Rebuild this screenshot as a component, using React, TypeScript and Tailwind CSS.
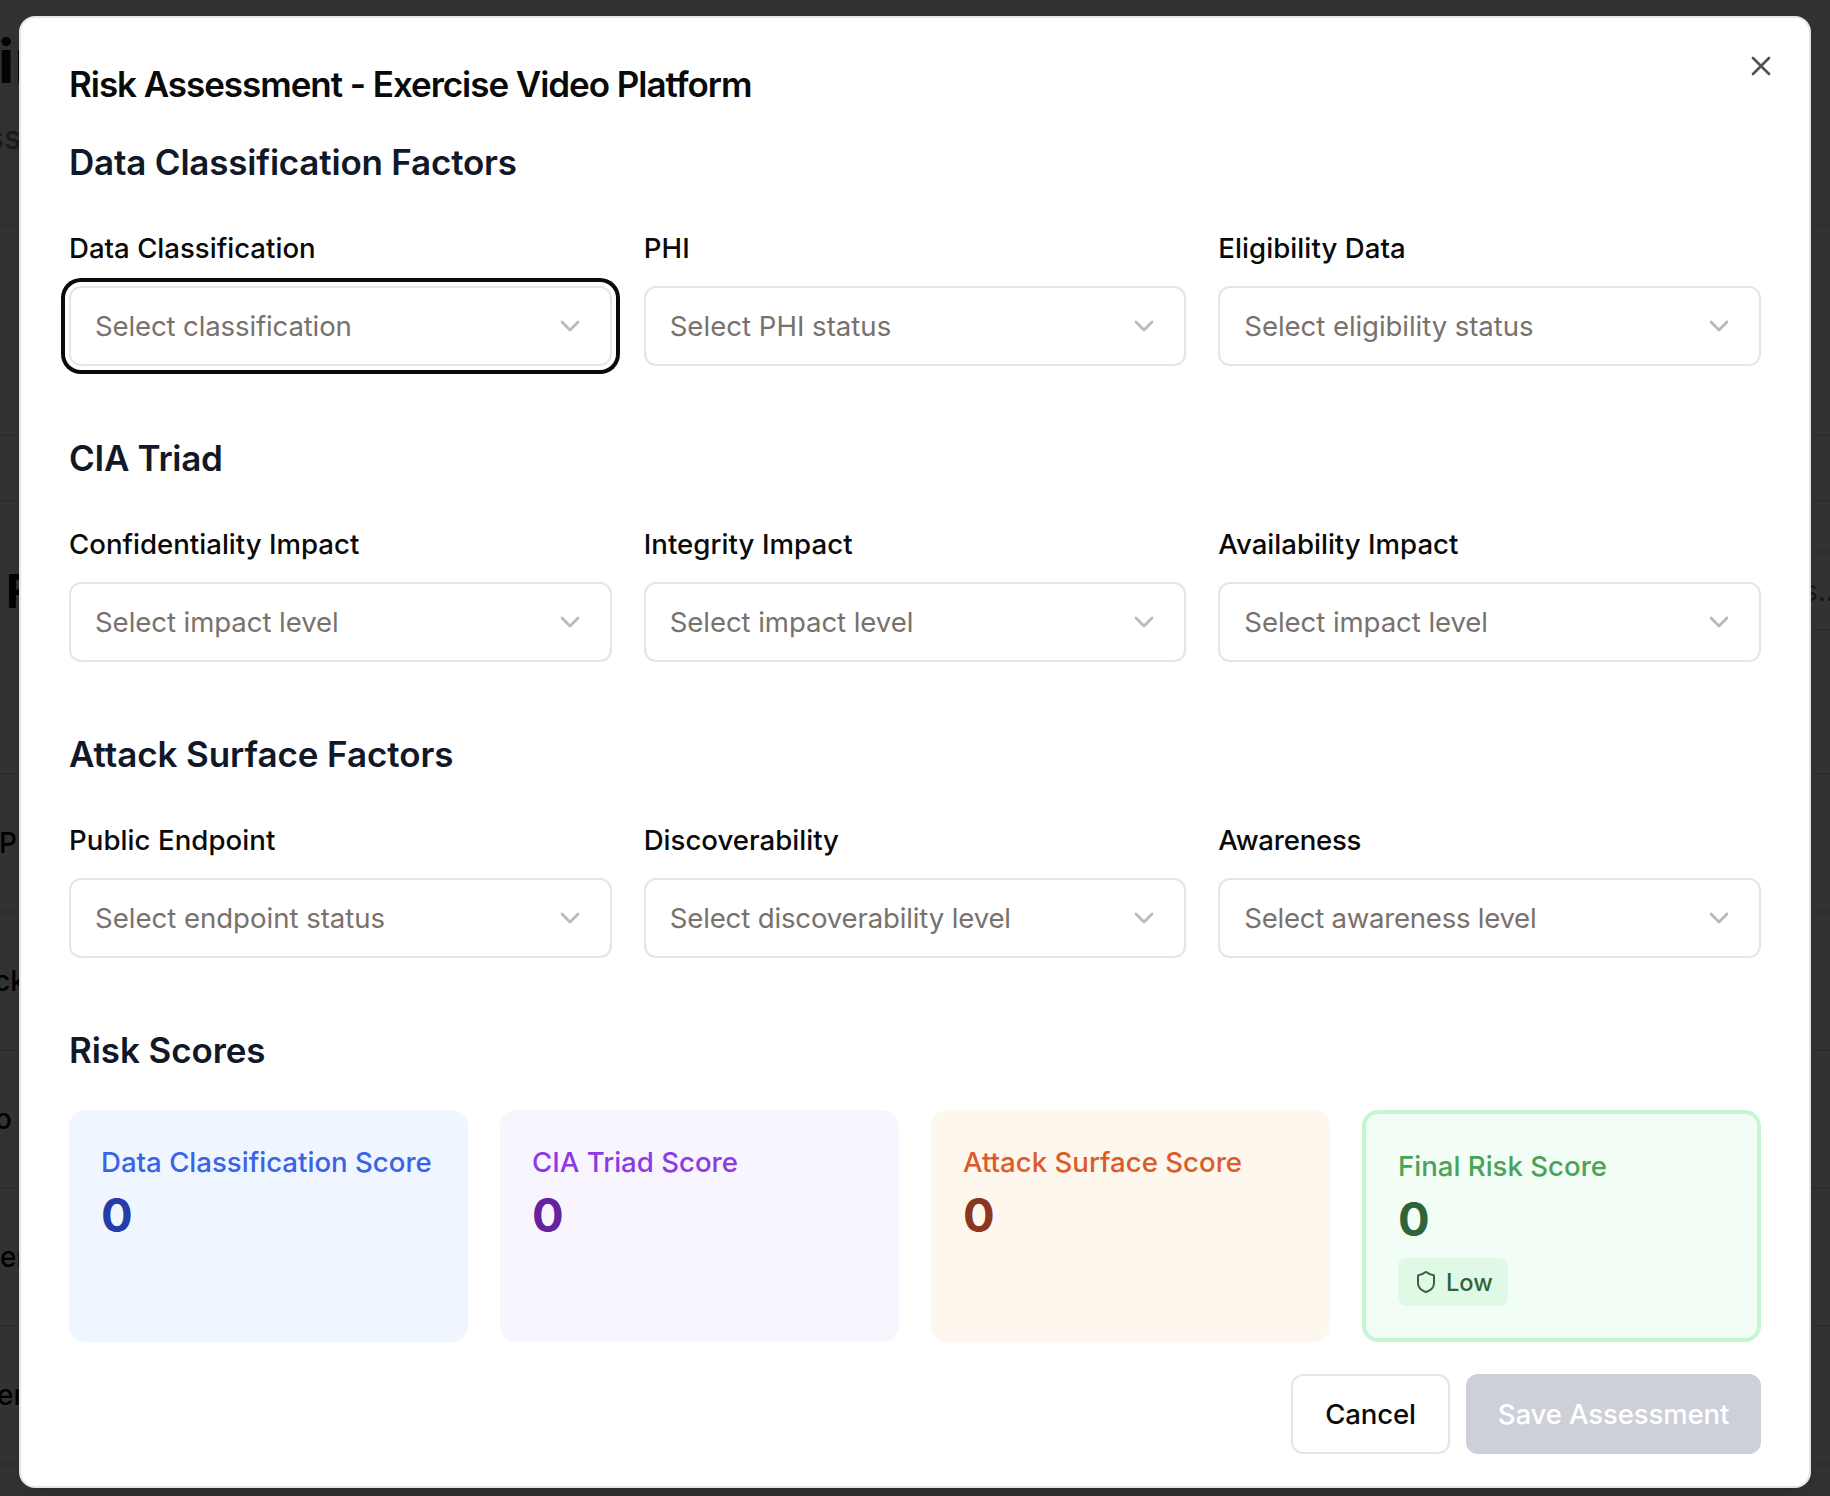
import { ChevronDown, Shield, X } from "lucide-react";

type Field = { label: string; placeholder: string; focused?: boolean; labelClass?: string; textClass?: string };

const sections: { title: string; spacing: string; fields: Field[] }[] = [
  {
    title: "Data Classification Factors",
    spacing: "tracking-[-0.2px]",
    fields: [
      { label: "Data Classification", placeholder: "Select classification", textClass: "tracking-[-0.15px]", focused: true },
      { label: "PHI", placeholder: "Select PHI status", labelClass: "tracking-[0.2px]", textClass: "tracking-normal" },
      { label: "Eligibility Data", placeholder: "Select eligibility status", labelClass: "tracking-[0.06px]" },
    ],
  },
  {
    title: "CIA Triad",
    spacing: "tracking-[-0.3px]",
    fields: [
      { label: "Confidentiality Impact", placeholder: "Select impact level" },
      { label: "Integrity Impact", placeholder: "Select impact level", labelClass: "tracking-[0.06px]" },
      { label: "Availability Impact", placeholder: "Select impact level" },
    ],
  },
  {
    title: "Attack Surface Factors",
    spacing: "tracking-[-0.08px]",
    fields: [
      { label: "Public Endpoint", placeholder: "Select endpoint status", labelClass: "tracking-[0.06px]", textClass: "tracking-[-0.03px]" },
      { label: "Discoverability", placeholder: "Select discoverability level", textClass: "tracking-[-0.16px]" },
      { label: "Awareness", placeholder: "Select awareness level", labelClass: "tracking-[-0.25px]", textClass: "tracking-[-0.27px]" },
    ],
  },
];

const scores = [
  { label: "Data Classification Score", box: "bg-[#eff6ff]", text: "text-[#3a63e8]", value: "text-[#263da8]" },
  { label: "CIA Triad Score", box: "bg-[#f8f5fe]", text: "text-[#8b3ae4]", value: "text-[#64249f]" },
  { label: "Attack Surface Score", box: "bg-[#fef7ed]", text: "text-[#dd5b2a]", value: "text-[#8b3720]" },
];

const rows = [
  { text: "P", offset: "-ml-px" },
  { text: "ck", offset: "-ml-[6px]" },
  { text: "o", offset: "-ml-[5px]" },
  { text: "er", offset: "ml-0" },
  { text: "er", offset: "-ml-[3px]" },
];

function Backdrop() {
  return (
    <div className="flex h-full w-full flex-col overflow-hidden bg-[#333333] whitespace-nowrap">
      <div className="h-[226px] shrink-0 border-b-2 border-[#303030] bg-[#323232]">
        <div className="-ml-[2px] pt-[31px] text-[60px] leading-[60px] font-bold text-[#030507]">in</div>
        <div className="-ml-[13px] pt-[25px] text-[32px] leading-[44px] text-[#17191c]">ss</div>
      </div>
      <div className="h-[210px] shrink-0 border-b-2 border-[#2e2e2e]" />
      <div className="h-[66px] shrink-0 border-b-2 border-[#2e2e2e]" />
      <div className="flex h-[273px] shrink-0 items-start justify-between border-b-2 border-[#2e2e2e]">
        <div className="ml-[6px] pt-[61px] text-[46px] leading-[56px] font-bold text-[#020202]">F</div>
        <div className="mt-[49px] flex h-[80px] w-[40px] items-center overflow-hidden border-y-2 border-[#2e2e2e] text-[28px] text-[#181716]">
          <span className="ml-[13px]">s...</span>
        </div>
      </div>
      {rows.map((r, i) => (
        <div key={i} className="flex h-[138px] shrink-0 items-center border-b-2 border-[#2e2e2e] text-[28px] font-medium text-[#020202]">
          <span className={r.offset}>{r.text}</span>
        </div>
      ))}
    </div>
  );
}

function SelectField({ label, placeholder, focused, labelClass = "", textClass = "tracking-[-0.08px]" }: Field) {
  return (
    <div className="flex min-w-0 flex-col gap-[18px]">
      <label className={"text-[27.6px] leading-[40px] font-medium text-[#0a0a0a] " + labelClass}>{label}</label>
      <button
        className={
          "flex h-20 items-center justify-between rounded-xl border-2 border-[#e5e5e5] bg-white px-6 text-[27.6px] text-[#78716c]" +
          (focused ? " ring-4 ring-[#0c0a09] ring-offset-4" : "")
        }
      >
        <span className={"pt-px " + textClass}>{placeholder}</span>
        <ChevronDown className="size-8 opacity-50" />
      </button>
    </div>
  );
}

export default function App() {
  return (
    <div className="relative h-[1496px] w-[1830px] overflow-hidden font-['Inter',sans-serif]">
      <Backdrop />
      <div className="absolute top-4 left-[19px] flex h-[1472px] w-[1792px] flex-col rounded-2xl border-2 border-[#e5e5e5] bg-white px-12 pt-12 shadow-[0_20px_30px_-6px_rgb(0_0_0/0.1),0_8px_12px_-8px_rgb(0_0_0/0.1)]">
        <h2 className="text-[35px] leading-9 font-semibold tracking-[-1.05px] text-[#0a0a0a]">
          Risk Assessment - Exercise Video Platform
        </h2>
        <div className="mt-8 flex flex-col gap-16">
          {sections.map((s) => (
            <section key={s.title}>
              <h3 className={"text-[35px] leading-[56px] font-semibold text-[#111827] " + s.spacing}>{s.title}</h3>
              <div className="mt-[38px] grid grid-cols-3 gap-8">
                {s.fields.map((f) => (
                  <SelectField key={f.label} {...f} />
                ))}
              </div>
            </section>
          ))}
          <section>
            <h3 className="text-[35px] leading-[56px] font-semibold tracking-[-0.1px] text-[#111827]">Risk Scores</h3>
            <div className="mt-8 grid h-[232px] grid-cols-4 gap-8">
              {scores.map((s) => (
                <div key={s.label} className={"rounded-2xl p-8 whitespace-nowrap " + s.box}>
                  <div className={"text-[27.6px] leading-10 font-medium " + s.text}>{s.label}</div>
                  <div className={"mt-px text-[47px] leading-[64px] font-bold " + s.value}>0</div>
                </div>
              ))}
              <div className="rounded-2xl border-4 border-[#c5f6d3] bg-[#f2fdf5] p-8">
                <div className="text-[27.6px] leading-10 font-medium text-[#4aa356]">Final Risk Score</div>
                <div className="mt-px text-[47px] leading-[64px] font-bold text-[#2f643b]">0</div>
                <div className="mt-[7px] flex h-12 w-[110px] items-center gap-2 rounded-lg bg-[#e0f9e7] px-4 text-[23.6px] font-medium text-[#2f643b]">
                  <Shield className="size-6 shrink-0" />
                  <span className="pt-px">Low</span>
                </div>
              </div>
            </div>
          </section>
        </div>
        <div className="mt-8 flex justify-end gap-4 text-[27.6px] font-medium whitespace-nowrap">
          <button className="h-20 w-[159px] rounded-xl border-2 border-[#e5e5e5] bg-white pt-0.5 tracking-[-0.15px] text-[#0a0a0a]">Cancel</button>
          <button className="h-20 w-[295px] rounded-xl bg-[#cdd0d9] pt-0.5 tracking-[-0.15px] text-white">Save Assessment</button>
        </div>
        <button className="absolute top-8 right-8 opacity-70">
          <X className="size-8 text-[#0a0a0a]" />
        </button>
      </div>
    </div>
  );
}
